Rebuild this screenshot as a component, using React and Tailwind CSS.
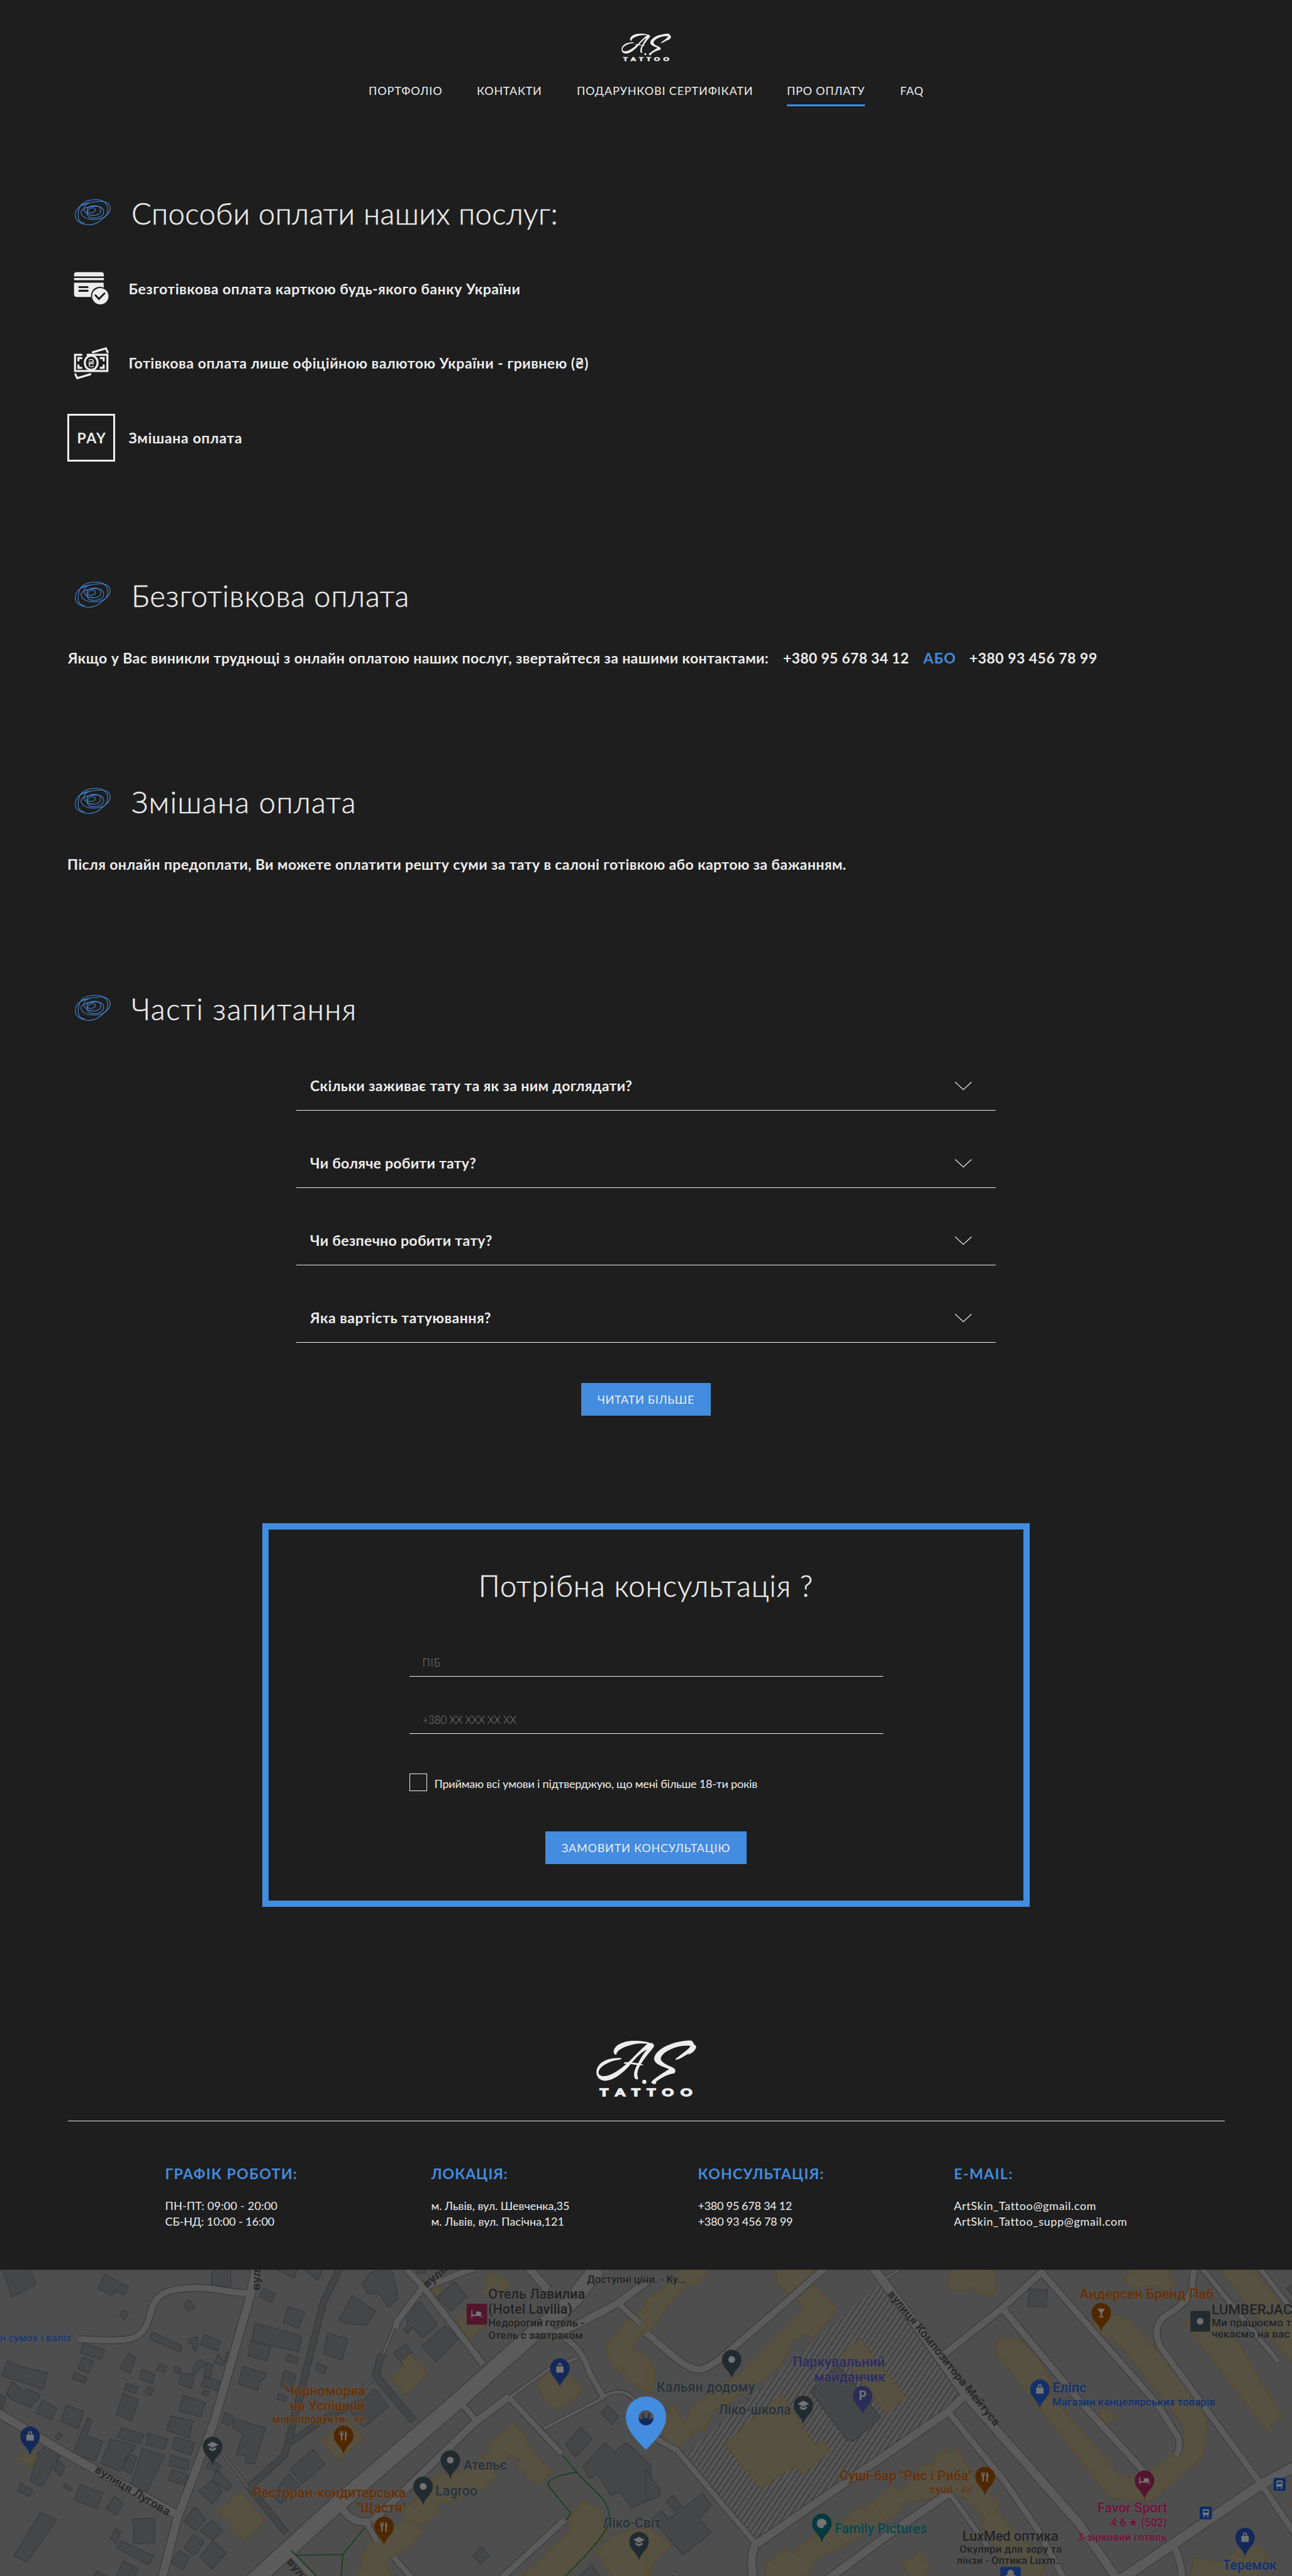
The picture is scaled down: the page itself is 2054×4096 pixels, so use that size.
import React from "react";

const NAV = [
  { label: "ПОРТФОЛІО", cls: "tracking-[0.95px]" },
  { label: "КОНТАКТИ", cls: "tracking-[0.75px]" },
  { label: "ПОДАРУНКОВІ СЕРТИФІКАТИ", cls: "tracking-[0.86px]" },
  { label: "ПРО ОПЛАТУ", cls: "tracking-[0.75px]", active: true },
  { label: "FAQ", cls: "tracking-[0.69px]" },
];

const QUESTIONS = [
  { text: "Скільки заживає тату та як за ним доглядати?", cls: "tracking-[0.4px]" },
  { text: "Чи боляче робити тату?", cls: "tracking-[0.27px]" },
  { text: "Чи безпечно робити тату?", cls: "tracking-[0.33px]" },
  { text: "Яка вартість татуювання?", cls: "tracking-[0.52px]" },
];

const CONTACTS = [
  {
    title: "ГРАФІК РОБОТИ:",
    cls: "tracking-[1.46px]",
    lines: [
      ["ПН-ПТ: 09:00 - 20:00", "tracking-[0.23px]"],
      ["СБ-НД: 10:00 - 16:00", "tracking-[-0.08px]"],
    ],
  },
  {
    title: "ЛОКАЦІЯ:",
    cls: "tracking-[1px]",
    lines: [
      ["м. Львів, вул. Шевченка,35", "tracking-[-0.01px]"],
      ["м. Львів, вул. Пасічна,121", "tracking-[0.09px]"],
    ],
  },
  {
    title: "КОНСУЛЬТАЦІЯ:",
    cls: "tracking-[1.3px]",
    lines: [
      ["+380 95 678 34 12", "tracking-[-0.28px]"],
      ["+380 93 456 78 99", "tracking-[-0.2px]"],
    ],
  },
  {
    title: "E-MAIL:",
    cls: "tracking-[1.44px]",
    lines: [
      ["ArtSkin_Tattoo@gmail.com", "tracking-[0.62px]"],
      ["ArtSkin_Tattoo_supp@gmail.com", "tracking-[0.61px]"],
    ],
  },
];

function Logo({ className }) {
  const letters = [["T", 95], ["A", 232], ["T", 377], ["T", 514], ["O", 649], ["O", 814]];
  return (
    <svg className={`overflow-visible ${className}`} viewBox="65 70 890 503" fill="#ededed">
      <path d="M243 200C222 200 215 180 222 158C235 110 310 75 400 75C450 75 500 80 533 90C540 95 548 93 555 95C572 98 580 110 578 125C560 155 520 195 480 255C455 290 430 330 430 375C430 395 438 405 437 415C425 425 410 418 404 400C395 360 410 320 440 270C460 225 490 185 515 152C460 180 420 225 380 270C330 340 230 425 150 431C100 432 66 400 66 355C68 290 130 240 220 231C250 228 285 226 291 233C285 245 240 245 200 258C130 285 85 320 85 360C90 395 140 395 180 380C260 350 340 280 400 215C440 175 480 135 520 102C450 92 380 105 320 130C275 150 245 170 243 200Z" />
      <path d="M310 272C315 262 340 265 400 270C440 275 470 283 488 290C475 298 450 293 400 286C360 280 325 280 312 280Z" />
      <path d="M768 242C770 232 800 215 830 190C870 160 895 140 903 122C880 115 800 118 740 145C680 170 645 200 638 232C640 265 690 290 730 305C760 320 770 330 768 345C767 358 762 365 750 366C700 375 650 400 598 438C600 450 597 458 590 460C570 463 553 455 556 440C565 425 640 370 712 328C660 305 580 285 580 235C582 180 660 125 740 100C800 80 880 70 908 73C925 80 930 95 936 112C940 105 945 108 954 130C950 155 920 190 880 198L895 182C860 205 800 245 775 244Z" />
      <circle cx="492" cy="440" r="18" fill="#fff" />
      {letters.map(([ch, x], i) => (
        <text
          key={i}
          transform={`translate(${x} 567) scale(1.42 1)`}
          className="font-['Lato'] font-black"
          fontSize="92"
          stroke="#ededed"
          strokeWidth="7"
        >
          {ch}
        </text>
      ))}
    </svg>
  );
}

function Scribble() {
  return (
    <svg className="mt-[6px] h-[41px] w-[57px] shrink-0" viewBox="66 68 318 229" fill="none" stroke="#438cdf" strokeWidth="6">
      <path d="M155 279C95 282 92 220 96 190C102 110 160 72 250 71C330 70 358 110 358 160C358 225 300 247 230 247C160 245 121 215 121 183C121 150 180 133 240 130C295 127 322 145 322 180C322 215 280 235 230 234C190 232 172 212 176 188C180 160 200 143 225 143C250 143 252 165 240 178C225 192 190 192 175 178C165 155 185 124 245 124C285 124 297 145 296 170C292 200 255 211 225 211C180 208 145 180 145 150C147 125 170 105 195 98" />
      <path d="M195 98C120 110 70 150 69 210C70 265 130 294 195 294C270 290 310 240 340 215C370 190 382 170 380 145C375 100 340 85 290 86C230 87 180 98 125 122" />
    </svg>
  );
}

const HEADING = "whitespace-nowrap text-[47px] leading-[56px] font-light [-webkit-text-stroke:0.5px_#ededed]";

function Heading({ children, className }) {
  return (
    <div className={`flex items-start gap-[33.5px] pl-[118.5px] ${className}`}>
      <Scribble />
      <h2 className={HEADING}>{children}</h2>
    </div>
  );
}

function CardIcon() {
  return (
    <svg className="size-[76px]" viewBox="30 21 426 426" fill="#ededed">
      <path d="M90 125V110Q90 87 113 87H333Q356 87 356 110V125ZM90 139H356V158H90ZM90 181H354V225Q325 212 296 220Q240 240 240 308H115Q90 308 90 283Z" />
      <path d="M137 220H211M137 253H211" stroke="#1e1e1e" strokeWidth="17" strokeLinecap="round" />
      <circle cx="324" cy="301" r="73" />
      <path d="M281 293L312 325L361 276" fill="none" stroke="#1e1e1e" strokeWidth="17" strokeLinecap="round" />
    </svg>
  );
}

function CashIcon() {
  return (
    <svg className="size-[76px]" viewBox="30 686 426 426" fill="none" stroke="#ededed" strokeWidth="18" strokeLinecap="round">
      <path d="M156 821H99V965H387V821H210" />
      <ellipse cx="243" cy="892" rx="57" ry="64" />
      <path d="M257 799L374 764L390 799M102 995L119 1030L235 995" />
      <path d="M156 851H129V872M129 915V938H156M327 851H354V872M354 915V938H327" />
      <path d="M224 868C240 858 258 862 262 872C264 880 256 884 246 886M222 886H264M222 900H264M240 900C226 904 222 912 226 920C232 930 248 930 262 922" strokeWidth="8" />
    </svg>
  );
}

function Map() {
  const L = "translate(0 -16) scale(1.2245 0.5906)";
  const R = "translate(1920 -16) scale(1.2245 0.5906)";
  const roadsL = [
    [13, "M622 0L610 140L520 790L430 1280L393 1580"],
    [10, "M190 376C330 392 345 385 365 250C375 150 400 120 480 118C530 120 560 148 612 145"],
    [13, "M-10 740L160 950L440 1270"],
    [26, "M600 1620L822 1200L1115 680L1250 430L1390 180L1450 20"],
    [10, "M985 20L1028 115L1172 500"],
    [13, "M1280 10L1330 130"],
    [10, "M1150 20L1025 120L963 290L960 320"],
    [4, "M962 290L930 450"],
    [12, "M1580 70L1500 195L1395 310L1350 345L1310 320"],
    [9, "M1498 190L1555 300"],
    [9, "M1370 370Q1415 430 1430 540L1465 670"],
    [5, "M1465 665Q1510 610 1540 680M1465 670L1320 825M1400 470L1330 530L1236 670"],
    [12, "M1236 665L1155 790L1045 1010L905 1290M830 1215Q845 1300 900 1296"],
    [9, "M1115 685L1158 790M1236 670L1362 950M890 1300L915 1390M955 1470L1010 1600M700 1440L780 1620"],
    [10, "M1370 1285L1205 1600"],
    [3, "M540 950L602 1120M905 570L860 680"],
  ];
  const darkL = [
    [9, "M825 20L785 190L735 600L700 890L690 960L605 1120L695 1350"],
    [8, "M700 900L800 760L880 690"],
    [10, "M926 450L912 560L1005 790"],
  ];
  const roadsR = [
    [14, "M545 0L640 260L770 640L850 830L1050 1300L1150 1600"],
    [11, "M965 30L865 220L725 450"],
    [11, "M865 220L1050 680L1195 1010L1215 1060"],
    [10, "M960 40L1240 700L1292 870Q1300 920 1286 960"],
    [10, "M1330 10L1325 130Q1310 200 1260 260Q1225 320 1250 420L1495 1110L1580 1370"],
    [8, "M1350 20L1440 250L1535 490M1490 20L1580 260"],
    [16, "M1580 1010L1498 1100L1140 1600"],
    [11, "M1275 1400Q1300 1470 1302 1600"],
    [13, "M778 650L730 745L265 1410Q250 1470 262 1600"],
    [10, "M735 745L870 1090L950 1330L1020 1600"],
    [8, "M735 1145L830 1420"],
    [13, "M735 1150L600 1340L430 1600"],
    [9, "M-5 840L75 935L265 1400"],
    [11, "M433 20L340 190L200 440Q150 530 128 528Q105 530 60 450L0 345"],
    [4, "M620 20L575 80M60 1560Q75 1530 75 1600"],
  ];
  const greyL =
    "M0 0H70L87 100L30 165ZM255 50L313 115L300 155L283 132L272 157L237 122ZM515 20H560V118L512 100ZM460 180L475 220L455 235L447 200ZM300 228L312 240L302 280L290 260ZM640 120L668 150L660 190L628 165ZM700 213L740 240L725 320L687 290ZM665 20H722L715 70ZM735 20H785L772 82ZM855 157L912 235L890 305L845 300L822 280ZM900 40L950 20L960 100L967 170L943 218L920 145L893 150L878 100ZM1015 20H1032V45H1012ZM1103 88L1133 160L1095 235L1060 165ZM1020 190L1062 305L1025 370L1000 315L990 350L980 325L990 310L985 245ZM1080 308L1115 370L1058 490L1025 410ZM985 400L1000 445L985 480L980 510L955 445ZM620 295L732 360L725 440L610 385ZM608 385L658 415L648 485L602 460ZM795 345L845 375L830 480L785 450ZM700 452L724 470L720 500L693 485ZM370 340L443 410L437 440L362 375ZM495 353L535 385L528 435L487 405ZM478 363L482 400L475 440L467 420L470 400L457 398V380ZM203 395L254 430L245 478L195 445ZM200 465L228 488L215 548L190 525ZM312 447L330 470L315 548L293 520ZM18 487L55 515L115 545L105 630L50 590L4 560ZM180 542L212 570L205 598L175 575ZM345 528L376 555L370 600L339 575ZM388 497L404 512L400 545L380 530ZM425 512L440 527L435 552L421 540ZM485 475L500 500L470 555L468 520ZM530 450L545 490L540 510L520 490ZM550 440L570 450L560 508L545 490ZM500 495L518 500L510 570L495 560ZM440 545L473 555L465 625L433 600ZM497 565L536 590L528 637L488 610ZM308 597L335 617L330 648L302 630ZM360 612L373 628L365 660L351 640ZM495 632L508 640L504 662L490 652ZM590 512L647 550L640 580L632 580L625 633L578 600ZM690 533L718 555L708 640L680 610ZM770 497L794 515L788 550L765 530ZM677 650L697 665L692 690L672 680ZM30 590L60 640L65 625L98 655L90 690L85 685L75 718L28 680L15 650ZM0 655L15 670L5 735L0 730ZM300 648L336 680L320 785L282 755ZM445 657L499 695L487 767L434 735ZM103 683L138 722L125 782L88 745ZM160 707L203 740L190 825L148 790ZM415 762L468 785L460 872L405 835ZM545 745L565 760L556 812L538 795ZM565 775L645 822L617 1005L597 995L595 960L573 955L590 855L565 820ZM295 820L350 855L340 900L283 870ZM213 772L224 785L210 860L250 890L232 985L175 955ZM358 847L408 880L398 928L355 905ZM425 865L472 897L463 960L418 925ZM143 842L152 860L142 885L134 870ZM268 878L330 910L290 1040L245 1000ZM125 890L155 925L102 1118L74 1090L90 950ZM345 925L400 960L355 1150L318 1110ZM310 950L332 965L318 1055L296 1030ZM415 960L460 985L455 1035L410 1010ZM140 985L158 1015L148 1065L132 1035ZM418 1030L458 1060L448 1110L408 1085ZM510 980L538 1015L530 1045L500 1020ZM525 1030L563 1110L553 1140L515 1085ZM515 1085L540 1140L515 1205L482 1140ZM760 930L789 1005L733 1100L703 1030ZM700 1055L728 1110L682 1205L660 1160ZM910 625L942 715L883 820L850 740ZM50 1100L80 1135L72 1168L42 1140ZM160 1100L174 1130L168 1140L153 1115ZM195 1108L250 1148L236 1228L180 1185ZM278 1165L300 1205L282 1262L257 1225ZM98 1247L138 1283L65 1497L34 1465ZM322 1280L375 1275V1400L325 1403ZM472 1218L500 1280L475 1338L446 1290ZM515 1285L540 1340L515 1385L485 1340ZM282 1327L293 1345L282 1400L268 1380ZM470 1360L495 1390L480 1445L470 1462L446 1425ZM295 1390L373 1465L360 1510L282 1425ZM435 1440L460 1470L445 1535L415 1500ZM518 1388L550 1450L515 1532L485 1470ZM300 1490L335 1530L320 1600H275ZM1475 710L1502 765L1485 807L1458 745ZM1410 817L1437 880L1397 968L1372 905ZM1468 895L1495 955L1490 945L1520 895L1580 1010V1180L1535 1225L1505 1145L1483 1160L1450 1055L1430 1075L1415 1015ZM1170 1420L1188 1465L1165 1505L1148 1465ZM1437 1510L1460 1580H1400ZM235 1540L260 1568V1600H220Z";
  const yelL =
    "M1188 43L1238 93L1212 175L1172 145ZM1043 95L1073 120L1060 165ZM1130 235L1182 305L1138 378L1110 290ZM995 452L1039 550L985 655L951 575L982 515L975 490ZM1330 530L1345 560L1385 560L1412 630L1395 675L1355 728L1320 680L1305 600ZM1568 210L1530 270L1470 410L1485 500L1505 545L1510 515L1525 580L1580 650V480L1532 420L1580 300V210ZM845 785L883 875L822 983L781 885ZM582 1147L642 1290L593 1385L531 1240ZM1245 800L1278 860V905L1320 1000L1338 1050L1305 1110L1255 1015L1262 985L1240 955L1200 1045L1205 1060L1175 1125L1150 1135L1140 1155L1092 1195H1055L1065 1240L1025 1312L1005 1290L985 1285L978 1240L1010 1180L1060 1060L1125 1040L1190 940L1188 905ZM985 1280L1022 1345L1005 1400L960 1460L935 1490L950 1580H855L880 1520V1450L905 1400ZM1415 1193L1455 1230L1460 1290L1475 1340L1440 1430L1370 1580H1262L1320 1470L1385 1340V1270ZM1580 1310L1490 1360L1450 1445L1490 1580H1580ZM60 940L90 965L78 1013L43 980Z";
  const greyR =
    "M930 123L975 128L971 216L927 210ZM400 640L440 560L465 510L490 560L570 772L503 890L495 880L490 890ZM1555 120L1580 80V190ZM0 1030L36 1140L30 1170L0 1190ZM65 1160L87 1215L70 1242L48 1190ZM137 1150L159 1208L130 1280L159 1348L90 1462L15 1280L38 1238L55 1280Z";
  const yelR =
    "M85 10H158L130 95L100 100L50 210L30 280L0 350V180L60 95ZM320 10H405L400 90L460 215L455 250L405 370L385 350L350 395L330 500L270 600L225 650L190 720L165 730L140 840L120 830L78 925L50 890L35 830L65 705L95 800L110 760L105 730L230 545L265 470L388 220L350 145L315 90ZM0 500L20 520V600L0 640ZM745 10H840L851 85L845 148L815 155L795 115L765 138L735 122V65ZM1185 10H1268V80L1287 95L1265 140L1238 105H1210L1190 128L1158 80ZM520 375L630 665L582 750L475 450ZM330 650L410 910L432 885L447 940L380 1055L362 1010L278 1127L192 905ZM855 370L907 380L955 480L985 600L980 650L1150 1065L1205 1072L1305 915V810L1160 425L1125 365L1088 350L1090 250L1135 250Q1180 280 1200 350L1270 500L1340 690L1362 785L1352 965L1222 1192L1127 1170L955 720L848 440ZM1345 230L1440 400L1543 765L1505 828L1308 295ZM1390 10H1465L1580 300V520L1530 400ZM1110 720L1140 765L1118 805L1097 750ZM755 928L790 1050L825 1130L858 1215L850 1240L885 1320L900 1380L935 1410L970 1500L955 1580H890L815 1300L825 1280L790 1200L740 1130L700 1170L640 1197L620 1200V1235L582 1290L552 1200L598 1110L620 1150L670 1010L700 1010V970L725 930L737 955ZM550 1195L582 1295L490 1400L465 1430L410 1480L385 1580H290V1500L340 1435L350 1460L440 1320L480 1290L515 1215L530 1238ZM0 1310L62 1415L15 1500L0 1580ZM663 1443L690 1515L655 1600L623 1515ZM1330 1475L1395 1500L1435 1435L1485 1420L1508 1465L1480 1580H1320ZM1580 1150L1562 1200L1580 1240Z";
  const green =
    "M885 1325L832 1458L718 1462M832 1458L828 1580M705 1435L775 1580M1366 960L1400 1045L1445 1140Q1480 1200 1480 1290Q1470 1370 1365 1580M1400 1045Q1330 1065 1330 1110L1385 1250L1375 1285";
  const O = "#6a2f00";
  const D = "#222222";
  const S = "#263238";
  const B = "#10306e";
  const P = "#741138";
  // [side, left, right, baseline, text, colour, size]
  const labels = [
    [0, 1185, 1420, 172, "Отель Лавилиа", D, 40],
    [0, 1185, 1389, 248, "(Hotel Lavilia)", D, 40],
    [0, 1185, 1418, 312, "Недорогий готель -", D, 30],
    [0, 1185, 1415, 374, "Отель с завтраком", D, 30],
    [0, 0, 172, 389, "н сумок і валіз", "#173878", 31],
    [0, 692, 887, 659, "Чорноморка", O, 40],
    [0, 704, 885, 736, "на Успішній", O, 40],
    [0, 661, 887, 796, "морепродукти · ₴₴", O, 31],
    [0, 614, 985, 1172, "Ресторан-кондитерська", O, 40],
    [0, 864, 987, 1247, "\"Щастя\"", O, 40],
    [0, 1125, 1230, 1031, "Ательє", S, 40],
    [0, 1057, 1159, 1162, "Lagroo", S, 40],
    [0, 1425, 1665, 94, "Доступні ціни. - Ку...", D, 31],
    [0, 1463, 1604, 1323, "Ліко-Світ", S, 40],
    [1, 26, 264, 639, "Кальян додому", S, 40],
    [1, 176, 352, 755, "Ліко-школа", S, 40],
    [1, 356, 580, 515, "Паркувальний", "#2b2b60", 40],
    [1, 408, 581, 589, "майданчик", "#2b2b60", 40],
    [1, 1053, 1378, 174, "Андерсен Бренд Паб", O, 40],
    [1, 1373, 1590, 251, "LUMBERJACK", D, 40],
    [1, 1373, 1580, 313, "Ми працюємо та", D, 31],
    [1, 1373, 1562, 368, "чекаємо на вас", D, 31],
    [1, 987, 1069, 644, "Еліпс", B, 40],
    [1, 986, 1382, 710, "Магазин канцелярських товарів", B, 31],
    [1, 470, 792, 1087, "Суші-бар \"Рис і Риба\"", O, 40],
    [1, 689, 793, 1149, "суші · ₴₴", O, 31],
    [1, 458, 682, 1350, "Family Pictures", "#03484a", 40],
    [1, 768, 1001, 1388, "LuxMed оптика", D, 40],
    [1, 761, 1009, 1448, "Окуляри для зору та", D, 31],
    [1, 754, 1015, 1507, "лінзи - Оптика Luxm...", D, 31],
    [1, 1096, 1265, 1248, "Favor Sport", P, 40],
    [1, 1128, 1264, 1317, "4.6 ★ (502)", P, 33],
    [1, 1047, 1264, 1388, "3-зірковий готель", P, 31],
    [1, 1400, 1531, 1535, "Теремок", B, 40],
  ];
  const streets = [
    [0, 630, 132, -88, 130, "вулиця"],
    [0, 1036, 122, -41, 130, "вулиця"],
    [0, 228, 1042, 31, 255, "вулиця Лугова"],
    [0, 695, 1495, 52, 130, "вулиця"],
    [1, 586, 150, 51, 506, "вулиця Композитора Мейтуса"],
  ];
  const pins = [
    [0, 73, 815, "#13295a", "bag"],
    [0, 1359, 473, "#13295a", "bag"],
    [0, 516, 866, "#222c30", "cap"],
    [0, 834, 811, "#502800", "food"],
    [0, 932, 1268, "#502800", "food"],
    [0, 1093, 935, "#222c30", "dot"],
    [0, 1027, 1067, "#222c30", "dot"],
    [0, 1551, 1344, "#222c30", "cap"],
    [1, 208, 429, "#222c30", "dot"],
    [1, 382, 660, "#222c30", "cap"],
    [1, 526, 611, "#2b2d57", "P"],
    [1, 1105, 194, "#502800", "glass"],
    [1, 956, 579, "#13306a", "bag"],
    [1, 823, 1017, "#502800", "food"],
    [1, 427, 1253, "#053a3e", "art"],
    [1, 1210, 1036, "#52152d", "bed"],
    [1, 1454, 1324, "#13295a", "bag"],
  ];
  const px = (side, x) => x * 1.2245 + side * 1920;
  const py = (y) => y * 0.5906 - 16;
  const road = (list, casing, fill) => (
    <>
      {list.map(([w, d], i) => (
        <path key={"c" + i} d={d} stroke={casing} strokeWidth={w + 2.4} vectorEffect="non-scaling-stroke" />
      ))}
      {list.map(([w, d], i) => (
        <path key={"f" + i} d={d} stroke={fill} strokeWidth={w - 0.6} vectorEffect="non-scaling-stroke" />
      ))}
    </>
  );
  const glyph = {
    bag: <path d="M-11 24H11V42H-11ZM-6 24V20A6 6 0 0 1 6 20V24H3V20A3 3 0 0 0 -3 20V24Z" />,
    cap: <path d="M0 15L17 24L0 33L-17 24ZM-10 31L0 37L10 31V38L0 43L-10 38Z" />,
    food: <path d="M-11 16H-9V24H-7V16H-5V24H-3V16H-1V26L-4 29V44H-8V29L-11 26ZM4 44V16Q10 17 10 30H8V44Z" />,
    dot: <circle cy="29" r="10" />,
    glass: <path d="M-11 17H11L2 30V40H7V43H-7V40H-2V30Z" />,
    art: <path d="M0 15A14 14 0 1 0 6 41C2 37 8 33 14 32A14 15 0 0 0 0 15Z" />,
    bed: <path d="M-16 19H-13V34H13V28Q13 23 8 23H-2V32H-13V41H-16ZM13 34H16V41H13ZM-13 36H16V34H-13Z" />,
    P: (
      <text x="0" y="42" textAnchor="middle" fontSize="36" className="font-['Roboto'] font-bold">
        P
      </text>
    ),
  };
  return (
    <svg className="block h-[487.5px] w-full bg-[#4e4e4e]" viewBox="0 0 3840 910" preserveAspectRatio="none">
      <defs>
        <pattern id="lots" width="14" height="14" patternUnits="userSpaceOnUse" patternTransform="rotate(34)">
          <rect width="14" height="14" fill="#565656" />
          <rect width="4" height="14" fill="#3f3f3f" />
        </pattern>
      </defs>
      <path d="M2612 43L2872 368L2244 805L2040 545Z" fill="url(#lots)" />
      <g fill="none" strokeLinejoin="round">
        <g transform={L}>
          {road(darkL, "#3a3b3c", "#434445")}
          <path d={greyL} fill="#454648" stroke="#393a3c" strokeWidth="1.3" vectorEffect="non-scaling-stroke" />
          <path d={yelL} fill="#565140" stroke="#5c4b26" strokeWidth="1.3" vectorEffect="non-scaling-stroke" />
          {road(roadsL, "#3f3f3f", "#5b5b5b")}
          <path d={green} stroke="#11401f" strokeWidth="1.6" vectorEffect="non-scaling-stroke" />
        </g>
        <g transform={R}>
          <path d={greyR} fill="#454648" stroke="#393a3c" strokeWidth="1.3" vectorEffect="non-scaling-stroke" />
          <path d={yelR} fill="#565140" stroke="#5c4b26" strokeWidth="1.3" vectorEffect="non-scaling-stroke" />
          {road(roadsR, "#3f3f3f", "#5b5b5b")}
        </g>
      </g>
      {streets.map(([s, x, y, a, len, t], i) => (
        <text
          key={i}
          transform={`translate(${px(s, x)} ${py(y)}) rotate(${a})`}
          textLength={len}
          lengthAdjust="spacingAndGlyphs"
          fontSize="34"
          fill="#2a2a2a"
          className="font-['Roboto'] font-bold"
        >
          {t}
        </text>
      ))}
      <g>
        <rect x="1387" y="101" width="61" height="62" rx="4" fill="#52152d" />
        <g transform="translate(1417 101)" fill="#777">{glyph.bed}</g>
        <rect x="3538" y="122" width="59" height="62" rx="4" fill="#222c30" />
        <circle cx="3567" cy="153" r="10" fill="#6e6e6e" />
        <rect x="2973" y="882" width="61" height="40" rx="4" fill="#13306a" />
        <path d="M2994 906V900A9 9 0 0 1 3013 900V906H3018V920H2989V906Z" fill="#6e6e6e" />
        {[[3785, 618], [3566, 703]].map(([x, y]) => (
          <g key={x}>
            <rect x={x} y={y} width="36" height="38" rx="5" fill="#0c2c66" />
            <path d={`M${x + 9} ${y + 8}h18v18h-18zM${x + 10} ${y + 28}h4v4h-4zM${x + 22} ${y + 28}h4v4h-4z`} fill="#777" />
            <path d={`M${x + 12} ${y + 12}h12v6h-12z`} fill="#0c2c66" />
          </g>
        ))}
      </g>
      {pins.map(([s, x, y, c, k], i) => (
        <g key={i} transform={`translate(${px(s, x)} ${py(y)})`}>
          <path d="M0 86C-4 62 -29 54 -29 29A29 29 0 0 1 29 29C29 54 4 62 0 86Z" fill={c} />
          <g fill="#747474">{glyph[k]}</g>
        </g>
      ))}
      {labels.map(([s, a, b, y, t, c, z], i) => (
        <text
          key={i}
          x={px(s, a)}
          y={py(y)}
          textLength={(b - a) * 1.2245}
          lengthAdjust="spacingAndGlyphs"
          fontSize={z}
          fill={c}
          stroke="#555555"
          strokeWidth="5"
          strokeOpacity="0.7"
          paintOrder="stroke"
          className="font-['Roboto'] font-medium"
        >
          {t}
        </text>
      ))}
      <path
        fillRule="evenodd"
        fill="#438cdf"
        d="M1920 535C1898 510 1860 480 1860 436A60 60 0 0 1 1980 436C1980 480 1942 510 1920 535ZM1920 417A22 22 0 1 0 1920 461A22 22 0 1 0 1920 417Z"
      />
      <path d="M1898 440A22 22 0 0 0 1942 440L1936 443H1904Z" fill="#13295a" />
      <path d="M1911 427V434A9 9 0 0 0 1929 434V427" fill="none" stroke="#13295a" strokeWidth="4" />
    </svg>
  );
}

export default function App() {
  return (
    <div className="flex h-[4096px] w-full flex-col overflow-hidden bg-[#1e1e1e] font-['Lato',sans-serif] text-[#ededed]">
      <header className="flex flex-col pt-[53px]">
        <Logo className="h-[45px] w-[79px] self-center" />
        <nav className="mt-[35px] grid grid-cols-[172px_159px_334px_180px_auto] pl-[586px] text-lg leading-[22px] whitespace-nowrap">
          {NAV.map((n) => (
            <div key={n.label} className="flex">
              <a className={`pb-[11px] ${n.cls} ${n.active ? "border-b-[3px] border-[#438cdf]" : ""}`}>{n.label}</a>
            </div>
          ))}
        </nav>
      </header>

      <main className="flex flex-col">
        <section className="mt-[142px] flex flex-col">
          <Heading className="tracking-[0.45px]">Способи оплати наших послуг:</Heading>
          <ul className="mt-[54px] ml-[107px] flex flex-col gap-[42.5px] text-[23px] font-bold whitespace-nowrap">
            <li className="flex h-[76px] items-center gap-[21.5px] tracking-[0.52px]">
              <CardIcon />
              <span>Безготівкова оплата карткою будь-якого банку України</span>
            </li>
            <li className="flex h-[76px] items-center gap-[21.5px] tracking-[0.53px]">
              <CashIcon />
              <span>Готівкова оплата лише офіційною валютою України - гривнею (₴)</span>
            </li>
            <li className="flex h-[76px] items-center gap-[21.5px] tracking-[0.66px]">
              <span className="flex size-[76px] items-center justify-center border-[3px] border-[#ededed] pl-0.5 tracking-[1.6px]">
                PAY
              </span>
              <span>Змішана оплата</span>
            </li>
          </ul>
        </section>

        <section className="mt-[184.7px] flex flex-col">
          <Heading className="tracking-[0.83px]">Безготівкова оплата</Heading>
          <p className="mt-[57px] grid grid-cols-[1137px_223px_73px_auto] pl-[108px] text-[23px] leading-7 font-bold whitespace-nowrap">
            <span className="tracking-[0.37px]">
              Якщо у Вас виникли труднощі з онлайн оплатою наших послуг, звертайтеся за нашими контактами:
            </span>
            <span className="tracking-[0.25px]">+380 95 678 34 12</span>
            <span className="tracking-[1.1px] text-[#438cdf]">АБО</span>
            <span className="tracking-[0.45px]">+380 93 456 78 99</span>
          </p>
        </section>

        <section className="mt-[187.4px] flex flex-col">
          <Heading className="tracking-[1.4px]">Змішана оплата</Heading>
          <p className="mt-[57px] pl-[107px] text-[23px] leading-7 font-bold tracking-[0.39px] whitespace-nowrap">
            Після онлайн предоплати, Ви можете оплатити решту суми за тату в салоні готівкою або картою за бажанням.
          </p>
        </section>

        <section className="mt-[188px] flex flex-col">
          <Heading className="tracking-[1.4px]">Часті запитання</Heading>
          <ul className="mt-[56.5px] flex w-[1112px] flex-col gap-[46px] self-center text-[23px] font-bold">
            {QUESTIONS.map((q) => (
              <li key={q.text} className="flex h-[77px] items-center justify-between border-b border-[#ededed] pr-[38px] pl-[22px]">
                <span className={q.cls}>{q.text}</span>
                <svg className="h-[14px] w-[27px]" viewBox="0 0 27 14" fill="none" stroke="#ededed" strokeWidth="1.2">
                  <path d="M0.5 0.5L13.5 12.7L26.5 0.5" />
                </svg>
              </li>
            ))}
          </ul>
          <button className="mt-[64px] h-[52px] w-[206px] self-center bg-[#438cdf] pt-px text-lg tracking-[0.71px]">ЧИТАТИ БІЛЬШЕ</button>
        </section>

        <form className="mt-[171px] flex h-[610px] w-[1220px] flex-col self-center border-[10.7px] border-[#438cdf] pt-[61px]">
          <h2 className={`${HEADING} self-center tracking-[1px]`}>Потрібна консультація ?</h2>
          <div className="mt-[83px] flex w-[753px] flex-col self-center">
            <label className="h-[34px] border-b border-[#ededed] pl-[21px] text-[17px] leading-[23px] font-light tracking-[0.78px] text-[#808080]">
              ПІБ
            </label>
            <label className="mt-[57px] h-[34px] border-b border-[#ededed] pl-[21px] text-[17px] leading-[23px] font-light tracking-[-0.24px] text-[#808080]">
              +380 XX XXX XX XX
            </label>
            <div className="mt-[63px] flex h-7 items-center gap-3 text-lg tracking-[-0.18px] whitespace-nowrap">
              <span className="size-7 border-[1.5px] border-[#ededed]" />
              <span className="pt-[4px]">Приймаю всі умови і підтверджую, що мені більше 18-ти років</span>
            </div>
          </div>
          <button type="button" className="mt-[64px] h-[52px] w-[320px] self-center bg-[#438cdf] pt-px text-lg tracking-[0.78px]">
            ЗАМОВИТИ КОНСУЛЬТАЦІЮ
          </button>
        </form>
      </main>

      <footer className="mt-[212.5px] flex flex-col">
        <Logo className="h-[90px] w-[159px] self-center" />
        <hr className="mx-[107.5px] mt-[38px] border-[#ededed]" />
        <div className="mt-[68.5px] grid grid-cols-[423px_424px_407px_auto] pb-[63px] pl-[262.5px] whitespace-nowrap">
          {CONTACTS.map((c) => (
            <div key={c.title} className="flex flex-col">
              <h3 className={`text-[23px] leading-7 font-bold text-[#438cdf] ${c.cls}`}>{c.title}</h3>
              <div className="mt-[25px] flex flex-col text-lg leading-[25.7px]">
                {c.lines.map(([t, cls]) => (
                  <span key={t} className={cls}>{t}</span>
                ))}
              </div>
            </div>
          ))}
        </div>
        <Map />
      </footer>
    </div>
  );
}
